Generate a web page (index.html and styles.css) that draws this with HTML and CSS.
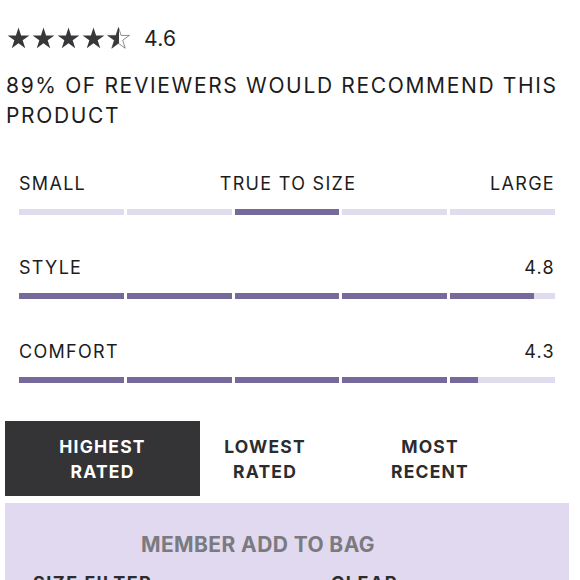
FILE: index.html
```html
<!DOCTYPE html>
<html lang="en">
<head>
    <meta charset="UTF-8">
    <title>Reviews</title>
    <link rel="stylesheet" href="styles.css">
</head>
<body>
    <section class="reviews">
        <div class="rating">
            <div class="stars">
                <svg class="star" viewBox="0 0 24 23"><polygon points="12,0.5 14.7,8.78 23.4,8.8 16.37,13.92 19.05,22.2 12,17.1 4.95,22.2 7.63,13.92 0.6,8.8 9.3,8.78"/></svg>
                <svg class="star" viewBox="0 0 24 23"><polygon points="12,0.5 14.7,8.78 23.4,8.8 16.37,13.92 19.05,22.2 12,17.1 4.95,22.2 7.63,13.92 0.6,8.8 9.3,8.78"/></svg>
                <svg class="star" viewBox="0 0 24 23"><polygon points="12,0.5 14.7,8.78 23.4,8.8 16.37,13.92 19.05,22.2 12,17.1 4.95,22.2 7.63,13.92 0.6,8.8 9.3,8.78"/></svg>
                <svg class="star" viewBox="0 0 24 23"><polygon points="12,0.5 14.7,8.78 23.4,8.8 16.37,13.92 19.05,22.2 12,17.1 4.95,22.2 7.63,13.92 0.6,8.8 9.3,8.78"/></svg>
                <svg class="star star--half" viewBox="0 0 24 23">
                    <defs><clipPath id="half"><rect x="0" y="0" width="12.6" height="23"/></clipPath></defs>
                    <polygon class="outline" points="12,0.5 14.7,8.78 23.4,8.8 16.37,13.92 19.05,22.2 12,17.1 4.95,22.2 7.63,13.92 0.6,8.8 9.3,8.78"/>
                    <polygon clip-path="url(#half)" points="12,0.5 14.7,8.78 23.4,8.8 16.37,13.92 19.05,22.2 12,17.1 4.95,22.2 7.63,13.92 0.6,8.8 9.3,8.78"/>
                </svg>
            </div>
            <span class="rating__value">4.6</span>
        </div>

        <h2 class="recommend">89% OF REVIEWERS WOULD RECOMMEND THIS PRODUCT</h2>

        <div class="measure">
            <div class="measure__labels">
                <span>SMALL</span>
                <span>TRUE TO SIZE</span>
                <span>LARGE</span>
            </div>
            <div class="bar">
                <span class="seg"></span>
                <span class="seg"></span>
                <span class="seg"><i style="width: 100%"></i></span>
                <span class="seg"></span>
                <span class="seg"></span>
            </div>
        </div>

        <div class="measure">
            <div class="measure__labels">
                <span>STYLE</span>
                <span>4.8</span>
            </div>
            <div class="bar">
                <span class="seg"><i style="width: 100%"></i></span>
                <span class="seg"><i style="width: 100%"></i></span>
                <span class="seg"><i style="width: 100%"></i></span>
                <span class="seg"><i style="width: 100%"></i></span>
                <span class="seg"><i style="width: 80%"></i></span>
            </div>
        </div>

        <div class="measure">
            <div class="measure__labels">
                <span>COMFORT</span>
                <span>4.3</span>
            </div>
            <div class="bar">
                <span class="seg"><i style="width: 100%"></i></span>
                <span class="seg"><i style="width: 100%"></i></span>
                <span class="seg"><i style="width: 100%"></i></span>
                <span class="seg"><i style="width: 100%"></i></span>
                <span class="seg"><i style="width: 27%"></i></span>
            </div>
        </div>

        <div class="sort">
            <button class="sort__tab active">HIGHEST<br>RATED</button>
            <button class="sort__tab">LOWEST<br>RATED</button>
            <button class="sort__tab">MOST<br>RECENT</button>
        </div>

        <div class="member">
            <div class="member__title">MEMBER ADD TO BAG</div>
            <div class="member__filter">
                <span>SIZE FILTER</span>
                <span>CLEAR</span>
            </div>
        </div>
    </section>
</body>
</html>
```

FILE: styles.css
```css
body {
    margin: 0;
    font-family: Inter, "Liberation Sans", sans-serif;
    color: #1c1c1c;
    background: #fff;
}

.reviews {
    width: 580px;
}

.rating {
    display: flex;
    align-items: center;
    padding: 27px 0 0 7px;
    height: 22px;
}

.stars {
    display: flex;
    gap: 2px;
}

.star {
    width: 23px;
    height: 22px;
    fill: #38383a;
}

.star--half .outline {
    fill: none;
    stroke: #38383a;
    stroke-width: 0.6;
}

.rating__value {
    margin-left: 14px;
    font-size: 21px;
    letter-spacing: 0.3px;
    color: #222;
}

.recommend {
    margin: 22px 0 0 6px;
    width: 565px;
    font-size: 21px;
    font-weight: 400;
    line-height: 30px;
    letter-spacing: 1.65px;
}

.measure {
    padding: 0 25px 0 19px;
    margin-top: 42px;
}

.measure + .measure {
    margin-top: 42px;
}

.measure__labels {
    display: flex;
    justify-content: space-between;
    font-size: 18px;
    letter-spacing: 1.3px;
    line-height: 22px;
}

.bar {
    display: flex;
    gap: 3px;
    margin-top: 14px;
}

.seg {
    flex: 1;
    height: 6px;
    background: #e0dbed;
}

.seg i {
    display: block;
    height: 100%;
    background: #76699b;
}

.sort {
    display: grid;
    grid-template-columns: 195px 130px 200px;
    margin: 38px 0 0 5px;
}

.sort__tab {
    height: 75px;
    border: 0;
    background: none;
    font-family: inherit;
    font-size: 17.5px;
    font-weight: 700;
    line-height: 25px;
    letter-spacing: 1.2px;
    color: #2c2c2e;
    padding: 0;
}

.sort__tab.active {
    background: #343436;
    color: #fff;
}

.member {
    margin: 7px 11px 0 5px;
    background: #e0d9ef;
    height: 120px;
}

.member__title {
    padding: 29px 58px 0 0;
    text-align: center;
    font-size: 21px;
    font-weight: 700;
    letter-spacing: 0.4px;
    color: #7b7a80;
}

.member__filter {
    display: grid;
    grid-template-columns: 298px 1fr;
    padding: 15px 0 0 28px;
    font-size: 18px;
    font-weight: 700;
    letter-spacing: 1.5px;
    color: #2c2c2e;
}
```
